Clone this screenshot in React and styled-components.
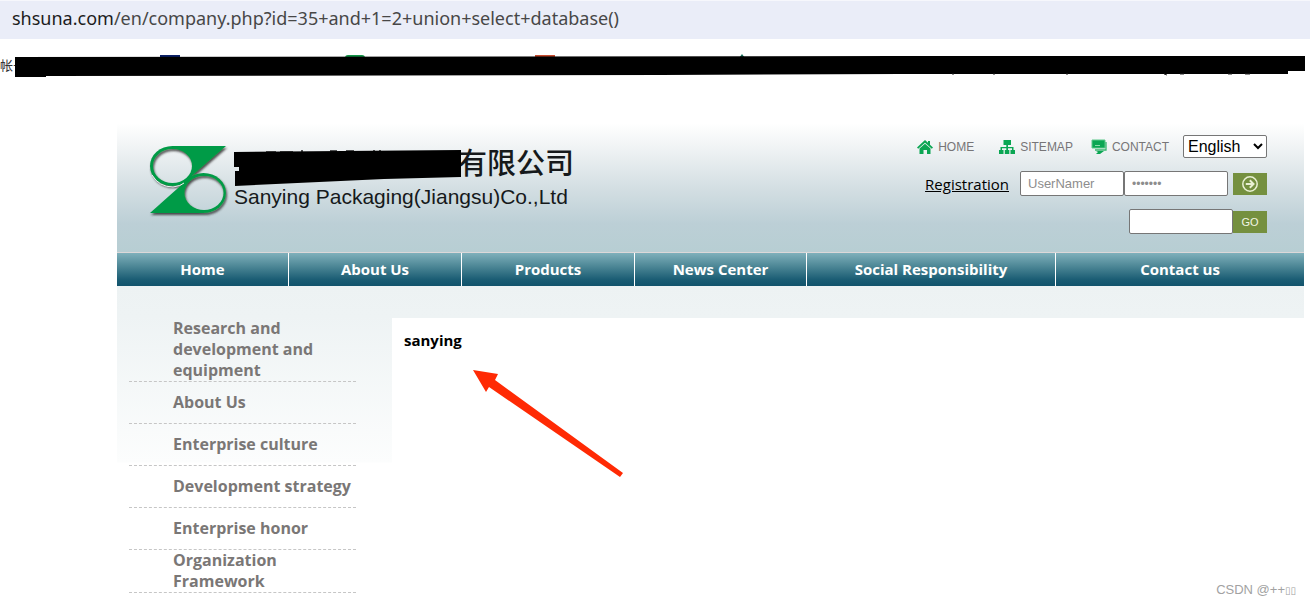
import React, { useState } from "react";
import styled, { createGlobalStyle } from "styled-components";

const GlobalStyle = createGlobalStyle`
  * {
    box-sizing: border-box;
  }
  body {
    margin: 0;
    background: #fff;
    color: #000;
    font-family: "Open Sans", "Noto Sans CJK SC", sans-serif;
    font-size: 16px;
  }
`;

const menuItems = ["Home", "About Us", "Products", "News Center", "Social Responsibility", "Contact us"];

const sideItems = [
  "Research and development and equipment",
  "About Us",
  "Enterprise culture",
  "Development strategy",
  "Enterprise honor",
  "Organization Framework",
];

const Page = styled.div`
  position: relative;
  min-height: 100vh;
  overflow: hidden;
`;

const AddressBar = styled.div`
  height: 39px;
  padding-left: 12px;
  background: #eaedf8;
  border-top: 1px solid #f6f7fc;
  color: #474747;
  font-family: "Noto Sans", "Open Sans", sans-serif;
  font-size: 18px;
  line-height: 35px;
  white-space: nowrap;
`;

const Domain = styled.span`
  color: #1c1c1c;
`;

const Bookmarks = styled.div`
  position: relative;
  height: 84px;
  padding-top: 17px;
  color: #333;
  font-size: 13px;
  line-height: 18px;
  font-family: "Noto Sans CJK SC", sans-serif;
`;

const BarStrip = styled.svg`
  position: absolute;
  left: 0;
  top: 15px;
`;

const Site = styled.div`
  margin: 0 6px 0 117px;
`;

const Header = styled.header`
  display: flex;
  justify-content: space-between;
  height: 130px;
  padding: 10px 37px 0 32px;
  background: linear-gradient(#fff 0%, #f1f4f5 18%, #d4dfe3 50%, #bccfd6 78%, #b7ced3 100%);
  border-bottom: 1px solid #dcd8d9;
`;

const Brand = styled.div`
  display: flex;
  gap: 5px;
  padding-top: 11px;
`;

const Company = styled.div`
  position: relative;
  min-width: 340px;
  color: #16191b;
  white-space: nowrap;
`;

const ChineseName = styled.div`
  font-family: "Noto Sans CJK SC", sans-serif;
  font-size: 29px;
  font-weight: 500;
  line-height: 34px;
  text-align: right;
`;

const EnglishName = styled.div`
  font-family: "Liberation Sans", Arial, sans-serif;
  font-size: 21px;
  line-height: 38px;
`;

const NameStrip = styled.svg`
  position: absolute;
  left: 0;
  top: 0;
`;

const Tools = styled.div`
  display: flex;
  flex-direction: column;
  align-items: flex-end;
  gap: 13px;
`;

const ToolRow = styled.div`
  display: flex;
  align-items: ${({ $align }) => $align || "center"};
  height: 25px;
`;

const QuickLink = styled.a`
  display: flex;
  align-items: center;
  gap: 5px;
  height: 23px;
  margin-right: ${({ $gap }) => $gap};
  color: #777577;
  font-family: "Liberation Sans", Arial, sans-serif;
  font-size: 12px;
  text-decoration: none;
`;

const Language = styled.select`
  width: 84px;
  height: 23px;
  border: 1px solid #767676;
  border-radius: 2px;
  background: #fff;
  font-family: "Liberation Sans", Arial, sans-serif;
  font-size: 16px;
`;

const Registration = styled.a`
  margin-right: 11px;
  color: #000;
  font-size: 15px;
`;

const Field = styled.input`
  width: 104px;
  height: 25px;
  padding: 0 7px;
  border: 1px solid #767676;
  border-radius: 2px;
  background: #fff;
  color: #8d8d8d;
  font-family: "Liberation Sans", Arial, sans-serif;
  font-size: ${({ type }) => (type === "password" ? "12px" : "13px")};
`;

const GreenButton = styled.button`
  display: flex;
  align-items: center;
  justify-content: center;
  width: 34px;
  height: 22px;
  margin-left: ${({ $space }) => $space || "0"};
  padding: 0;
  border: 0;
  background: #75903f;
  color: #f3f6e6;
  font-family: "Liberation Sans", Arial, sans-serif;
  font-size: 11px;
`;

const Menu = styled.nav`
  display: grid;
  grid-template-columns: 172fr 173fr 173fr 172fr 249fr 248fr;
`;

const MenuLink = styled.a`
  border-right: 1px solid #fff;
  background: linear-gradient(#7fb0bb, #4d8796 40%, #1b5d74 80%, #12536c);
  color: #fff;
  font-size: 15px;
  font-weight: 700;
  line-height: 33px;
  text-align: center;
  text-decoration: none;

  &:last-child {
    border-right: 0;
  }
`;

const Body = styled.div`
  display: flex;
  padding-top: 32px;
  background: linear-gradient(#edf2f3, #eef3f4 30px, #fcfdfd 176px, #fff 177px);
`;

const SideList = styled.ul`
  flex: 0 0 275px;
  margin: 0;
  padding: 0 36px 0 12px;
  list-style: none;
`;

const SideItem = styled.li`
  display: flex;
  align-items: center;
  min-height: 42px;
  padding-left: 44px;
  border-bottom: 1px dashed #c6c6c6;
`;

const SideLink = styled.a`
  color: #7a7776;
  font-size: 16px;
  font-weight: 700;
  line-height: 21px;
  text-decoration: none;
`;

const Main = styled.main`
  position: relative;
  flex: 1;
  min-width: 0;
  min-height: 288px;
  padding: 12px;
  background: #fff;
  font-size: 15px;
  font-weight: 700;
  line-height: 21px;
`;

const Arrow = styled.svg`
  position: absolute;
  left: 81px;
  top: 51px;
`;

const Watermark = styled.div`
  position: absolute;
  right: 14px;
  bottom: 6px;
  color: #a2a2a2;
  font-family: "Liberation Sans", "DejaVu Sans", sans-serif;
  font-size: 13px;
  line-height: 18px;
`;

const Boxes = styled.span`
  font-size: 10px;
`;

function Logo() {
  return (
    <svg width="80" height="74" viewBox="0 0 80 74">
      <defs>
        <mask id="holes">
          <rect width="80" height="74" fill="#fff" />
          <ellipse cx="23.5" cy="22" rx="19.5" ry="17" fill="#000" />
          <ellipse cx="55" cy="49" rx="19.5" ry="17" fill="#000" />
        </mask>
        <filter id="shade" x="-10%" y="-10%" width="125%" height="125%">
          <feDropShadow dx="1" dy="2" stdDeviation="0.8" floodColor="#333" floodOpacity="0.85" />
        </filter>
      </defs>
      <g filter="url(#shade)">
        <g mask="url(#holes)" fill="#049b46">
          <ellipse cx="23.5" cy="22" rx="22.5" ry="20" />
          <ellipse cx="54.5" cy="49" rx="22.5" ry="20" />
          <path d="M23 2H77L45 30L36 37L30 30Z" />
          <path d="M1 69L38 36L44 48L54 69Z" />
        </g>
      </g>
      <path d="M3 31Q10 43 24 43Q32 42 35 39" fill="none" stroke="#eef3f4" strokeWidth="1" />
    </svg>
  );
}

function HomeIcon() {
  return (
    <svg width="16" height="16" viewBox="0 0 16 16" fill="#0ba653">
      <path d="M8 1L0 8.5L1.2 9.8L8 3.7L14.8 9.8L16 8.5L13 5.7V2H11V3.8Z" />
      <path d="M2.5 9.6L8 4.8L13.5 9.6V15H10V11H6.5V15H2.5Z" />
    </svg>
  );
}

function SitemapIcon() {
  return (
    <svg width="16" height="16" viewBox="0 0 16 16" fill="#0ba653">
      <path d="M4.5 1H12V6H9V8H14.5V11H16V15H11.5V11H13V9.3H9V11H10.3V15H5.8V11H7.3V9.3H3V11H4.5V15H0V11H1.5V8H7.3V6H4.5Z" />
    </svg>
  );
}

function ContactIcon() {
  return (
    <svg width="16" height="16" viewBox="0 0 16 16">
      <path d="M1 1H14V9H1Z" fill="#0ba653" stroke="#5cc98b" />
      <path d="M4 11H15V3" fill="none" stroke="#36b56e" strokeWidth="1.3" />
      <path d="M4 6.5H9" stroke="#8bdcab" />
      <path d="M5 12H13L9 15H5L7 13Z" fill="#0ba653" />
    </svg>
  );
}

function GoArrow() {
  return (
    <svg width="18" height="18" viewBox="0 0 18 18" fill="none" stroke="#e9f0d3">
      <circle cx="9" cy="9" r="7.2" strokeWidth="1.5" />
      <path d="M4.8 9H12M8.8 5.3L12.5 9L8.8 12.7" strokeWidth="2" />
    </svg>
  );
}

function App() {
  const [language, setLanguage] = useState("English");

  return (
    <>
      <GlobalStyle />
      <Page>
        <AddressBar>
          <Domain>shsuna.com</Domain>/en/company.php?id=35+and+1=2+union+select+database()
        </AddressBar>
        <Bookmarks>
          帐号
          {/* tops of the favicons stick out above the black bar */}
          <BarStrip width="1310" height="26" viewBox="0 54 1310 26">
            <path d="M160 55H180V58H160Z" fill="#0a1f66" />
            <path d="M345 58Q345 55 348 55H362Q365 55 365 58Z" fill="#129447" />
            <path d="M535 55H555V58H535Z" fill="#c74a2d" />
            <path d="M739 58L742 54L745 58Z" fill="#16705a" />
            <path d="M15 57L900 56H1305V71H1288V74H900L660 75L46 76V77H15Z" />
            <path d="M952 74H954M993 74H995M1066 74H1068M1164 74L1167 75M1180 74H1184M1228 74H1232M1245 74H1250" stroke="#222" />
          </BarStrip>
        </Bookmarks>

        <Site>
          <Header>
            <Brand>
              <Logo />
              <Company>
                <ChineseName>有限公司</ChineseName>
                <EnglishName>Sanying Packaging(Jiangsu)Co.,Ltd</EnglishName>
                <NameStrip width="232" height="44" viewBox="0 0 232 44">
                  <path d="M32 8H42M46 8H59M68 6V10M96 7H103M112 7H120M140 6V10M146 6V10" stroke="#222" strokeWidth="1.5" />
                  <path d="M0 8L227 6V33L150 35L1 42V27H5V23H0Z" />
                </NameStrip>
              </Company>
            </Brand>
            <Tools>
              <ToolRow $align="flex-end">
                <QuickLink href="#" $gap="25px"><HomeIcon />HOME</QuickLink>
                <QuickLink href="#" $gap="18px"><SitemapIcon />SITEMAP</QuickLink>
                <QuickLink href="#" $gap="14px"><ContactIcon />CONTACT</QuickLink>
                <Language aria-label="Language" value={language} onChange={(e) => setLanguage(e.target.value)}>
                  <option>English</option>
                </Language>
              </ToolRow>
              <ToolRow>
                <Registration href="#">Registration</Registration>
                <Field type="text" aria-label="User name" defaultValue="UserNamer" />
                <Field type="password" aria-label="Password" defaultValue="1234567" />
                <GreenButton $space="5px" aria-label="Login"><GoArrow /></GreenButton>
              </ToolRow>
              <ToolRow>
                <Field type="text" aria-label="Search" />
                <GreenButton>GO</GreenButton>
              </ToolRow>
            </Tools>
          </Header>

          <Menu>
            {menuItems.map((item) => (
              <MenuLink href="#" key={item}>{item}</MenuLink>
            ))}
          </Menu>

          <Body>
            <SideList>
              {sideItems.map((item) => (
                <SideItem key={item}>
                  <SideLink href="#">{item}</SideLink>
                </SideItem>
              ))}
            </SideList>
            <Main>
              sanying
              <Arrow width="152" height="110" viewBox="473 369 152 110">
                <path d="M473 370L498 374L495 380L623 473L620 477L489 387L486 392Z" fill="#ff2a04" />
              </Arrow>
            </Main>
          </Body>
        </Site>
        <Watermark>CSDN @++<Boxes>▯▯</Boxes></Watermark>
      </Page>
    </>
  );
}

export default App;
